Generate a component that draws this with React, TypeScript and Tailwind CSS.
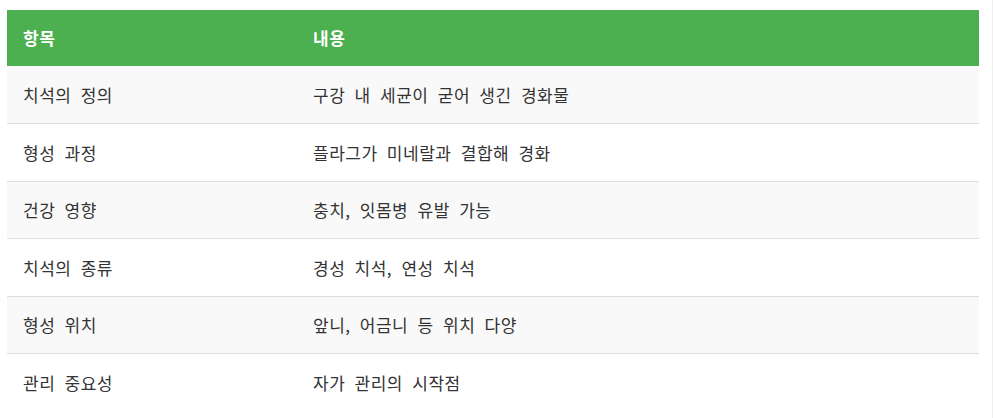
import React from "react";

const rows: [string, string][] = [
  ["치석의 정의", "구강 내 세균이 굳어 생긴 경화물"],
  ["형성 과정", "플라그가 미네랄과 결합해 경화"],
  ["건강 영향", "충치, 잇몸병 유발 가능"],
  ["치석의 종류", "경성 치석, 연성 치석"],
  ["형성 위치", "앞니, 어금니 등 위치 다양"],
  ["관리 중요성", "자가 관리의 시작점"],
];

export default function App() {
  return (
    <div
      className="w-[993px] h-[418px] bg-white overflow-hidden border-r border-[#eeeeee]"
      style={{ fontFamily: '"Noto Sans CJK KR", "Noto Sans", sans-serif' }}
    >
      <div className="pt-[10px] pl-[7px] w-[979px]">
        <table className="w-full border-collapse text-[17px] tracking-[0.5px] [word-spacing:5px]">
          <thead>
            <tr className="bg-[#4caf50] text-white">
              <th className="w-[290px] h-[56px] px-4 text-left font-bold">항목</th>
              <th className="h-[56px] px-4 text-left font-bold">내용</th>
            </tr>
          </thead>
          <tbody>
            {rows.map(([a, b], i) => (
              <tr
                key={i}
                className={
                  (i % 2 === 0 ? "bg-[#f9f9f9]" : "bg-white") +
                  (i < rows.length - 1 ? " border-b border-[#dddddd]" : "") +
                  " text-[#333333]"
                }
              >
                <td className="h-[57.5px] px-4">{a}</td>
                <td className="h-[57.5px] px-4">{b}</td>
              </tr>
            ))}
          </tbody>
        </table>
      </div>
    </div>
  );
}
